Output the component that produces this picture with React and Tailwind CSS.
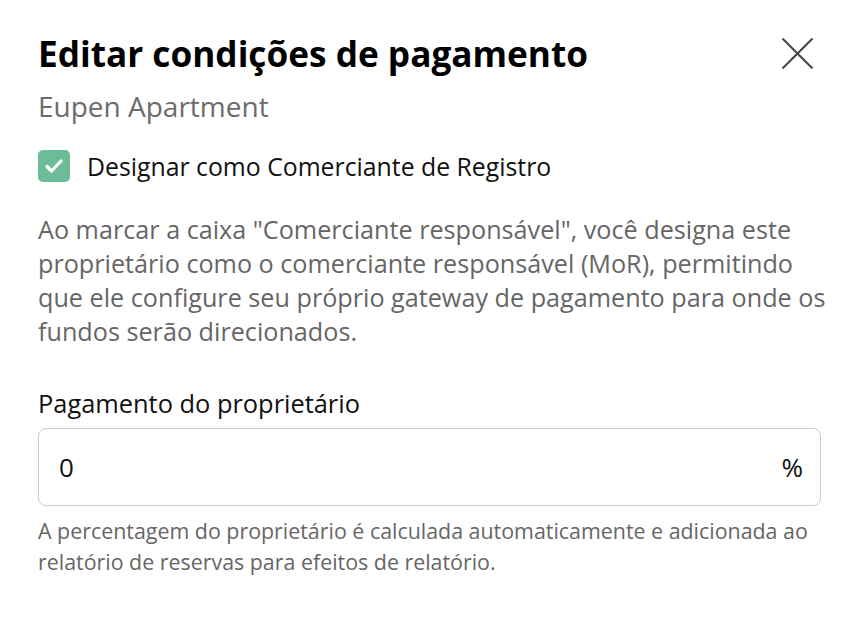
import React from "react";

export default function App() {
  return (
    <div className="w-[866px] h-[628px] bg-white" style={{ fontFamily: '"Open Sans", "Noto Sans", sans-serif' }}>
      <div className="px-[38px] pt-[31px]">
        <div className="flex items-start justify-between">
          <h1 className="text-[35.2px] leading-[44px] font-bold text-black whitespace-nowrap">Editar condições de pagamento</h1>
          <button className="mr-[15px] mt-[7px] text-[#444]" aria-label="Fechar">
            <svg width="31" height="31" viewBox="0 0 31 31" fill="none" stroke="currentColor" strokeWidth="2">
              <path d="M0.5 0.5L30.5 30.5M30.5 0.5L0.5 30.5" />
            </svg>
          </button>
        </div>
        <div className="mt-[14px] text-[28px] leading-[34px] text-[#6b6b6b]">Eupen Apartment</div>
        <label className="mt-[27px] flex items-center gap-[17px]">
          <span className="w-[32px] h-[32px] rounded-[5px] bg-[#6dbc99] flex items-center justify-center">
            <svg width="18" height="14" viewBox="0 0 18 14" fill="none" stroke="white" strokeWidth="3.2" strokeLinecap="round" strokeLinejoin="round">
              <path d="M2 7.5L6.5 12L16 2" />
            </svg>
          </span>
          <span className="text-[24.8px] leading-[32px] text-[#111]">Designar como Comerciante de Registro</span>
        </label>
        <p className="mt-[30px] text-[25.2px] leading-[34px] text-[#666]">
          <span className="block whitespace-nowrap">Ao marcar a caixa "Comerciante responsável", você designa este</span>
          <span className="block whitespace-nowrap">proprietário como o comerciante responsável (MoR), permitindo</span>
          <span className="block whitespace-nowrap">que ele configure seu próprio gateway de pagamento para onde os</span>
          <span className="block whitespace-nowrap">fundos serão direcionados.</span>
        </p>
        <div className="mt-[38px] text-[25.4px] leading-[34px] text-[#111]">Pagamento do proprietário</div>
        <div className="mt-[8px] mr-[7px] h-[78px] border border-[#cccccc] rounded-[8px] flex items-center justify-between pl-[20px] pr-[17px]">
          <span className="text-[26px] text-[#111]">0</span>
          <span className="text-[26px] text-[#111]">%</span>
        </div>
        <p className="mt-[9px] text-[21.4px] leading-[31px] text-[#666]">
          <span className="block whitespace-nowrap">A percentagem do proprietário é calculada automaticamente e adicionada ao</span>
          <span className="block whitespace-nowrap">relatório de reservas para efeitos de relatório.</span>
        </p>
      </div>
    </div>
  );
}
